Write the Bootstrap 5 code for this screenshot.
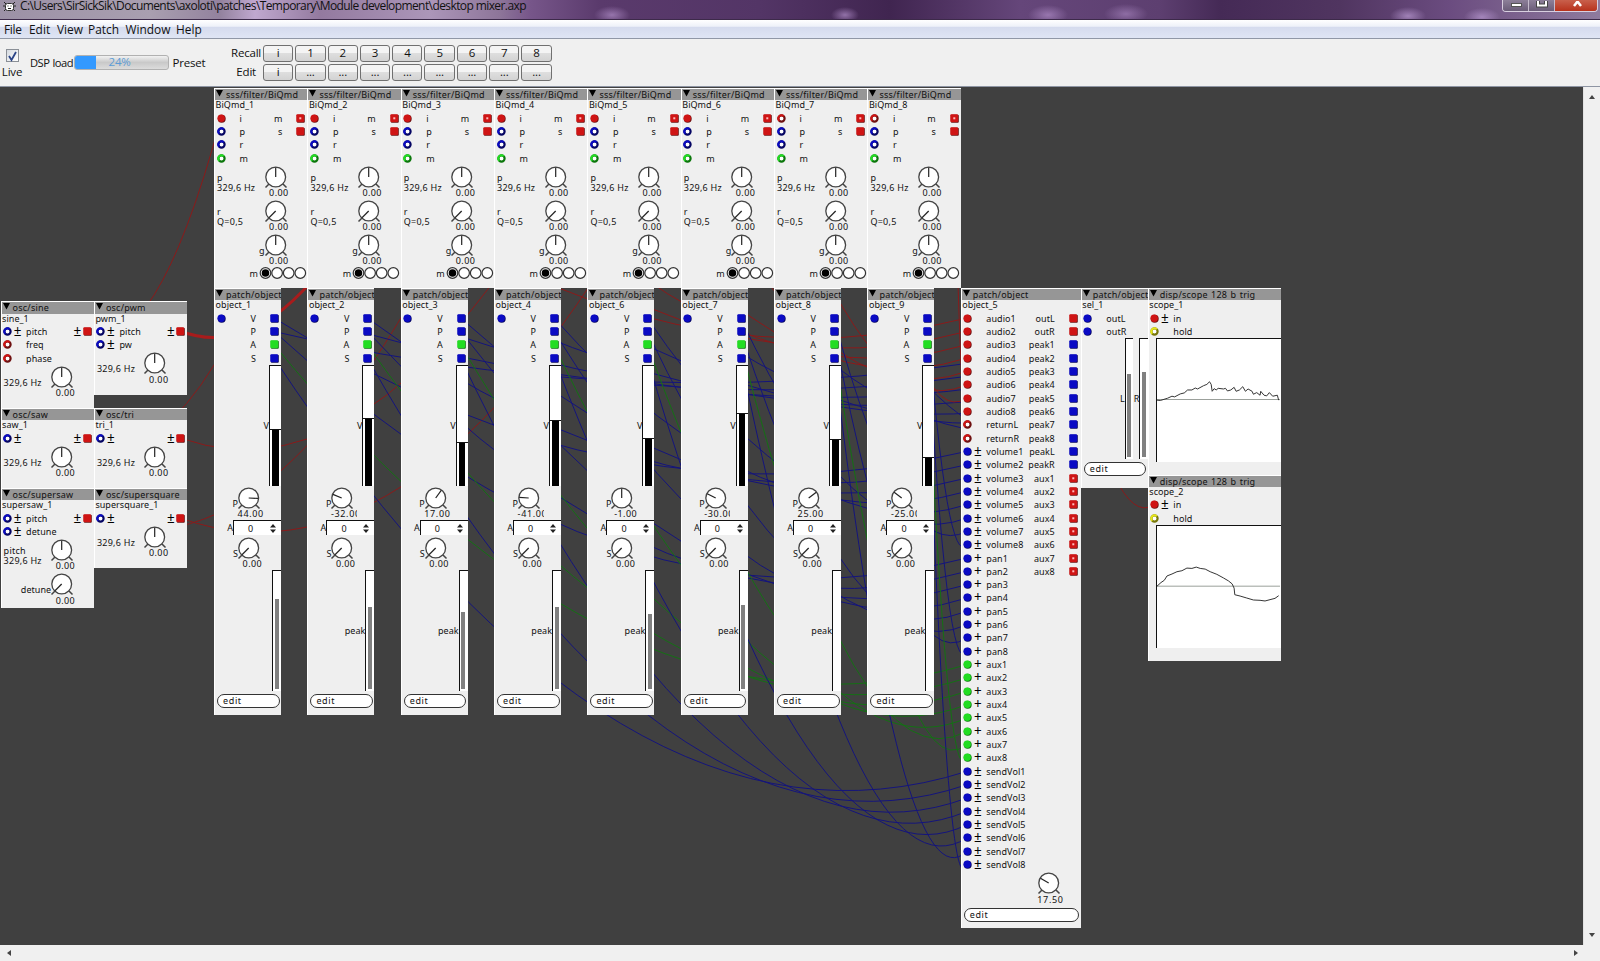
<!DOCTYPE html>
<html lang="en">
<head>
<meta charset="utf-8">
<title>desktop mixer.axp</title>
<link href="https://cdn.jsdelivr.net/npm/bootstrap@5.3.0/dist/css/bootstrap.min.css" rel="stylesheet">
<style>
html,body{height:100%}
body{font-family:"Open Sans","Noto Sans",sans-serif;font-size:12px;line-height:1;color:#111;background:#f0f0f0;overflow:hidden}
.titlebar{height:20px;padding-left:20px;font-size:12px;letter-spacing:-.59px;border-bottom:1px solid #3d2a4a;
 background:radial-gradient(ellipse 18px 9px at 612px 15px,#a583bccc,transparent),radial-gradient(ellipse 14px 8px at 845px 15px,#a583bccc,transparent),radial-gradient(ellipse 20px 10px at 1048px 15px,#a583bccc,transparent),radial-gradient(ellipse 22px 10px at 1126px 14px,#a583bcaa,transparent),radial-gradient(ellipse 18px 9px at 1408px 16px,#b091c8cc,transparent),radial-gradient(ellipse 18px 9px at 1482px 17px,#b091c8cc,transparent),
 linear-gradient(90deg,#9c91a6 0,#a99fb0 150px,#93829e 220px,#c0a8cf 255px,#937a9f 320px,#ac96b9 430px,#8d7599 500px,#77568a 530px,#5a3a6c 600px,#533566 760px,#402550 890px,#65467a 1020px,#5d3f70 1160px,#452a56 1220px,#503560 1340px,#6b4c80 1450px,#8f7b9e 1600px)}
.titlebar .app{left:3px;top:1px}
.titlebar .path{line-height:12px;white-space:nowrap}
.winbtns{right:2px;top:0;height:12px;border:1px solid #d8cfe0;border-top:0;border-radius:0 0 4px 4px;overflow:hidden}
.winbtns span{width:26px;background:linear-gradient(#8d8099,#6a5c78);border-right:1px solid #c5bccd}
.winbtns span:last-child{width:42px;background:linear-gradient(#c8604c,#b8321c);border:0}
.menubar{height:19px;border-bottom:1px solid #9097a6;background:linear-gradient(#fff 0,#eef1f9 35%,#d5dbee 40%,#dfe5f4 100%)}
.menubar span{position:static;line-height:18px;font-size:11.9px}
.menubar span:first-child{letter-spacing:-.3px}
.tools{height:48px;border-bottom:1px solid #8e95a3;font-size:11.5px;letter-spacing:-.2px}
.chk{width:13px;height:13px;border:1px solid #8a8f96;background:linear-gradient(135deg,#d5dae0,#fff)}
.dsp{width:43.5px;white-space:nowrap;letter-spacing:-.5px;word-spacing:.5px;font-size:11.2px}
.meter{width:95px;height:15px;border:1px solid #b1b1b1;border-radius:3px;background:linear-gradient(#f2f2f2,#c9c9c9 50%,#dcdcdc);overflow:hidden}
.meter i{width:21px;height:100%;background:#3399ff}
.meter b{left:34px;top:0;font-weight:400;color:#5c9cd6;line-height:12px}
.presets{display:grid;grid-template-columns:30px repeat(9,30.3px);column-gap:2px;row-gap:2.8px;align-content:start;padding-top:6px}
.presets div{height:16.6px;line-height:16px}
.presets .pb{border:1px solid #707070;border-radius:3px;background:linear-gradient(#f4f4f4 50%,#dedede 50%,#d3d3d3);text-align:center;line-height:14px}
.view{height:858px}
.sheet{width:1583px;background:#404040;overflow:hidden}
.vbar{width:17px;background:#f0f0f0;border-left:1px solid #e3e3e3}
.hbar{height:16px;background:#f0f0f0}
.wires{left:0;top:0;fill:none;stroke-width:1}
.unit{background:#efefef;border-top:1px solid #fff;border-left:1px solid #fff;font:9px/11px "Noto Sans",sans-serif;letter-spacing:.08px;color:#111;overflow:hidden;white-space:nowrap}
.unit .hd{height:11.3px;background:#969696;line-height:11px;padding-left:1px;letter-spacing:.22px;word-spacing:.8px}
.unit .hd svg{margin-right:3px;vertical-align:1px}
.unit .nm{height:11px;line-height:10.5px;padding-left:.5px;letter-spacing:.05px}
.port{height:13.333px;padding:0 2px 0 1.5px}
.wide .port{padding-right:3px}
.port .pm{width:11px;font-size:13.5px;line-height:11px;text-align:center;color:#000;letter-spacing:0}
.port .il{padding-left:3px}
.port .ol{padding-right:14px}
.port .ol.near{padding-right:0}
.port svg{flex:none}
.param{height:34.1px}
.param .lb{height:34px;letter-spacing:.25px}
.param .lb.stack{padding:8px 0 0 2px;line-height:10px}
.param .lb.mid{padding:12px 0 0 2px}
.param .lb.side{padding-top:12px;text-align:right;position:relative;left:2px;letter-spacing:.05px}
.dial{width:30px}
.dial svg{display:block}
.dial .vl{margin-top:-.6px;padding-left:3.5px;text-align:center;line-height:10px;letter-spacing:.4px;width:29px}
.dial .vl.long{text-align:left;padding-left:1.5px;width:29.5px;letter-spacing:.65px}
.dial .vl.clip{overflow:hidden;width:27.5px}
.radios{height:12px}
.track{background:#fff;border-left:1.5px solid #111;border-top:1.5px solid #111;height:121.3px}
.track i{display:block}
.spin{height:15px;width:48px;background:#fff;border-left:1.5px solid #111;border-top:1.5px solid #111;padding:0 5px 0 14px}
.ed{height:14px;border:1.3px solid #333;border-radius:7px;background:#fff;line-height:12px;padding-left:5px;margin:2.8px 1.5px 0 2px;letter-spacing:.6px}
</style>
</head>
<body class="d-flex flex-column">
<header class="titlebar position-relative flex-shrink-0">
 <svg class="app position-absolute" width="13" height="11" viewBox="0 0 13 11"><path d="M1 1l2 2M12 1l-2 2M0 5h3M13 5h-3M1 10l2-2M12 10l-2-2" stroke="#222"/><rect x="2.5" y="2.5" width="8" height="7" rx="2" fill="#fff" stroke="#333"/><path d="M4.500 5h1M7.500 5h1M5 7.500h3" stroke="#222"/></svg>
 <div class="path" id="path">C:\Users\SirSickSik\Documents\axoloti\patches\Temporary\Module development\desktop mixer.axp</div>
 <div class="winbtns position-absolute d-flex"><span><svg width="25" height="12"><rect x="8.500" y="2.500" width="10" height="3" fill="#fff" stroke="#555"/></svg></span><span><svg width="25" height="12"><rect x="9" y="-2" width="8" height="6.500" fill="none" stroke="#444" stroke-width="4"/><rect x="9" y="-2" width="8" height="6.500" fill="none" stroke="#fff" stroke-width="2"/></svg></span><span><svg width="42" height="12"><path d="M19 -4l7 9M26 -4l-7 9" stroke="#fff" stroke-width="2.500"/></svg></span></div>
</header>
<nav class="menubar d-flex flex-shrink-0" style="padding-left:4px"><span style="width:25px">File</span><span style="width:28px">Edit</span><span style="width:31px">View</span><span style="width:37.500px">Patch</span><span style="width:50.500px">Window</span><span>Help</span></nav>
<section class="tools d-flex flex-shrink-0">
 <div class="d-flex flex-column align-items-center" style="width:24px;padding-top:10px"><div class="chk"><svg width="11" height="11" viewBox="0 0 11 11"><path d="M2 5l2.500 4L9 1" fill="none" stroke="#2a4487" stroke-width="1.800"/></svg></div><div class="mt-1">Live</div></div>
 <div class="d-flex align-items-center" style="width:207px;padding-left:6px"><span class="dsp">DSP load</span><div class="meter position-relative d-flex"><i></i><b class="position-absolute">24%</b></div><span class="ms-1">Preset</span></div>
 <div class="presets" id="presets"></div>
</section>
<main class="view d-flex flex-shrink-0">
 <div class="sheet position-relative" id="sheet"></div>
 <div class="vbar d-flex flex-column justify-content-between align-items-center py-2"><svg width="6" height="4"><path d="M3 0l3 4H0z" fill="#444"/></svg><svg width="6" height="4"><path d="M3 4l3-4H0z" fill="#444"/></svg></div>
</main>
<footer class="hbar d-flex justify-content-between align-items-center flex-shrink-0" style="padding:0 22px 0 7px"><svg width="4" height="6"><path d="M0 3l4-3v6z" fill="#444"/></svg><svg width="4" height="6"><path d="M4 3l-4-3v6z" fill="#444"/></svg></footer>
<script src="https://cdn.jsdelivr.net/npm/bootstrap@5.3.0/dist/js/bootstrap.bundle.min.js"></script>
<script>
const U = 13.333, TOP = 87, RED = '#cf1414', BLUE = '#0a0ac4', GREEN = '#22dd22';
const DARK = {r:'#6d1010', b:'#050563', g:'#0b760b', y:'#77770a'}, MAIN = {r:RED, b:BLUE, g:GREEN, y:'#e6e61a'};

document.getElementById('presets').innerHTML = ['Recall','Edit'].map((n, r) =>
  `<div class="text-end" style="padding-right:5px">${n}</div><div class="pb">i</div>` +
  [1,2,3,4,5,6,7,8].map(k => `<div class="pb">${r ? '...' : k}</div>`).join('')).join('');

// Inlets: a lower-case code is wired (disc), an upper-case one is free (ring)
const disc = c => {
  if (!c) return '<svg width="9" height="9"></svg>';
  const k = c.toLowerCase(), free = c !== k;
  return free ? `<svg width="9" height="9"><circle cx="4.500" cy="4.500" r="3.100" fill="#fff" stroke="${DARK[k]}" stroke-width="2.200"/><path d="M2.300 6.700A3.100 3.100 0 0 1 6.700 2.300" fill="none" stroke="${MAIN[k]}" stroke-width="2"/></svg>`
   : `<svg width="9" height="9"><circle cx="4.700" cy="4.700" r="4" fill="${DARK[k]}"/><circle cx="4.200" cy="4.200" r="3.700" fill="${MAIN[k]}"/></svg>`;
};
const square = c => {
  const k = c.toLowerCase(), free = c !== k;
  return `<svg width="9" height="9"><rect x=".8" y=".8" width="8" height="8" rx="1" fill="${DARK[k]}"/><rect x=".3" y=".3" width="7.700" height="7.700" rx="1" fill="${MAIN[k]}"/>${free ? '<rect x="3.300" y="3.300" width="2" height="2" fill="#fbb"/>' : ''}</svg>`;
};
// port: [inlet, sign, label, outlet label, outlet sign, outlet]
const port = p => `<div class="port d-flex align-items-center">${disc(p[0])}<span class="pm">${p[1]||''}</span><span class="il">${p[2]||''}</span>` +
  (p[5] ? `<span class="ms-auto ol ${p[4] ? 'near' : ''}">${p[3]||''}</span>${p[4] ? `<span class="pm">${p[4]}</span>` : ''}${square(p[5])}` : '') + '</div>';
const dial = (a, v) => {
  const t = a * Math.PI / 180;
  const cls = v.length > 5 ? 'long clip' : v.length > 4 && v[0] !== '-' ? 'long' : '';
  return `<div class="dial"><svg width="26" height="24"><path d="M6 19l-3.500 3.500M20 19l3.500 3.500" stroke="#444" stroke-width="1.500"/><circle cx="12.700" cy="12" r="9.900" fill="#fff" stroke="#444" stroke-width="1.300"/><path d="M12.700 12L${12.7 + 9.5*Math.sin(t)} ${12 - 9.5*Math.cos(t)}" stroke="#222" stroke-width="1.200"/></svg><div class="vl ${cls}">${v}</div></div>`;
};
const param = (kind, w, label, a, v) => `<div class="param d-flex"><div class="lb ${kind}" style="width:${w}px">${label}</div>${dial(a, v)}</div>`;
const edit = '<div class="ed">edit</div>';
const units = [];
const unit = (x, row, w, rows, type, name, body, cls = '') =>
  units.push(`<div class="unit position-absolute ${cls}" style="left:${(x-.4).toFixed(2)}px;top:${(88.15 - TOP + row*U).toFixed(2)}px;width:${w}px;height:${(rows*U).toFixed(2)}px"><div class="hd"><svg width="7" height="7"><path d="M0 0h7l-3.500 6.500z" fill="#000"/></svg>${type}</div><div class="nm">${name}</div>${body}</div>`);

// oscillators
const hz = '329,6 Hz';
unit(1, 16, 93.4, 8, 'osc/sine', 'sine_1', port(['B','±','pitch','','±','r']) + port(['R','','freq']) + port(['R','','phase']) + param('mid', 47.6, hz, 0, '0.00'));
unit(94.3, 16, 93.4, 7, 'osc/pwm', 'pwm_1', port(['B','±','pitch','','±','r']) + port(['B','±','pw']) + param('mid', 47.6, hz, 0, '0.00'));
unit(1, 24, 93.4, 6, 'osc/saw', 'saw_1', port(['B','±','','','±','r']) + param('mid', 47.6, hz, 0, '0.00'));
unit(94.3, 24, 93.4, 6, 'osc/tri', 'tri_1', port(['B','±','','','±','r']) + param('mid', 47.6, hz, 0, '0.00'));
unit(1, 30, 93.4, 9, 'osc/supersaw', 'supersaw_1', port(['B','±','pitch','','±','r']) + port(['B','±','detune']) + param('stack', 47.6, 'pitch<br>' + hz, 0, '0.00') + param('side', 47.6, 'detune', -135, '0.00'));
unit(94.3, 30, 93.4, 6, 'osc/supersquare', 'supersquare_1', port(['B','±','','','±','r']) + param('mid', 47.6, hz, 0, '0.00'));

// filters
for (let k = 0; k < 8; k++)
  unit(214.5 + 93.33*k, 0, 93.4, 15, 'sss/filter/BiQmd', 'BiQmd_' + (k+1),
    port([k < 6 ? 'r' : 'R','','i','m','','R']) + port(['B','','p','s','','r']) + port(['B','','r']) + port(['G','','m']) +
    param('stack', 47.5, 'p<br>' + hz, 0, '0.00') + param('stack', 47.5, 'r<br>Q=0,5', -135, '0.00') + param('side', 47.5, 'g', 0, '0.00') +
    `<div class="radios d-flex justify-content-end align-items-center"><span style="padding-right:1px">m</span><svg width="48.500" height="12">${[0,1,2,3].map(i => `<circle cx="${6.5 + 11.6*i}" cy="6" r="5.300" fill="#fff" stroke="#333" stroke-width="1.200"/>`).join('')}<circle cx="6.500" cy="6" r="3.800" fill="#000"/></svg></div>`);

// channel strips: number, volume fill top, pan, peak fill top
[[1,429,44,599],[2,418.3,-32,607],[3,442,17,612],[4,420.5,-41,607],[6,438.5,-1,614],[7,413.7,-30,605],[8,439,25,0],[9,457.5,-25,0]].forEach((c, k) =>
  unit(214.5 + 93.33*k, 15, 67, 32, 'patch/object', 'object_' + c[0],
    port(['b','','','V','','b']) + port(['','','','P','','b']) + port(['','','','A','','g']) + port(['','','','S','','b']) +
    `<div class="d-flex justify-content-end align-items-center"><span>V</span><div class="track" style="width:12px"><i style="margin-top:${c[1]-366.2}px;border-top:1.500px solid #111"></i><i style="height:${485-c[1]}px;width:6.500px;margin-left:2px;background:#000"></i></div></div>` +
    param('side', 21, 'P', c[0] === 6 ? 0 : c[2]/64*135, c[2].toFixed(2)) +
    `<div class="d-flex justify-content-end align-items-center" style="height:15.500px"><span>A</span><div class="spin d-flex justify-content-between align-items-center"><span>0</span><svg width="6" height="9"><path d="M0 3.500l3-3.500L6 3.500zM0 5.500l3 3.500L6 5.500z" fill="#222"/></svg></div></div>` +
    param('side', 21, 'S', -135, '0.00') +
    `<div class="d-flex justify-content-end align-items-center"><span>${k ? 'peak' : ''}</span><div class="track" style="width:9px">${c[3] ? `<i style="margin-top:${c[3]-571}px;height:${689.5-c[3]}px;width:4px;margin-left:1.500px;background:#808080"></i>` : ''}</div></div>` + edit));

// mixer
const ins = [], outs = [];
const seq = (n, f) => Array.from({length:n}, (_, i) => f(i + 1));
ins.push(...seq(8, i => ['r','','audio'+i]), ['R','','returnL'], ['R','','returnR'], ...seq(8, i => ['b','±','volume'+i]), ...seq(8, i => ['b','+','pan'+i]), ...seq(8, i => ['g','+','aux'+i]), ...seq(8, i => ['b','±','sendVol'+i]));
outs.push(['outL','','r'], ['outR','','r'], ...seq(8, i => ['peak'+i,'','b']), ['peakL','','b'], ['peakR','','b'], ...seq(8, i => ['aux'+i,'','R']));
unit(961.2, 15, 120, 48, 'patch/object', 'object_5', ins.map((p, i) => port(p.concat(outs[i] || []))).join('') + param('side', 74, '', -60, '17.50') + edit, 'wide');
const bar = (l, top) => `<span>${l}</span><div class="track" style="width:8.500px"><i style="margin-top:${top-339.5}px;height:${457-top}px;width:4px;margin-left:1.500px;background:#808080"></i></div>`;
unit(1081.2, 15, 67.2, 15, 'patch/object', 'sel_1', port(['b','','outL']) + port(['b','','outR']) + `<div class="d-flex justify-content-end align-items-center">${bar('L', 374)}<span style="width:.500px"></span>${bar('R', 372.5)}</div>` + edit);

// scopes
const scope = (mid, pts) => `<div class="track ms-auto" style="width:124.500px;height:123.500px"><svg class="d-block" width="123" height="122" viewBox="0 0 370 371" preserveAspectRatio="none" fill="none"><path d="M0 ${mid}H370" stroke="#9a9f9a" stroke-width="3"/><polyline points="${pts}" stroke="#333" stroke-width="3"/></svg></div>`;
const shift = (s, dx, dy) => s.split(' ').map(p => p.split(',')).map(([x, y]) => (x-dx) + ',' + (y-dy)).join(' ');
unit(1148.2, 15, 133, 14, 'disp/scope 128 b trig', 'scope_1', port(['r','±','in']) + port(['Y','','hold']) +
  scope(184, shift('230,343 240,344 262,337 275,331 283,333 300,324 312,321 322,312 335,312 345,306 352,309 370,299 380,295 388,287 393,295 396,316 402,308 408,312 414,307 430,309 436,307 442,315 452,312 462,304 468,316 478,312 488,302 496,316 504,309 516,316 520,325 530,320 540,328 542,316 552,328 560,330 568,320 578,331 592,328 596,343', 230, 157)));
unit(1148.2, 29, 133, 14, 'disp/scope 128 b trig', 'scope_2', port(['r','±','in']) + port(['Y','','hold']) +
  scope(183, shift('50,346 62,335 72,328 80,315 95,309 110,302 125,299 140,291 155,292 168,288 180,292 195,294 210,302 230,310 250,321 265,330 276,339 282,352 284,372 300,376 320,382 340,388 360,389 375,391 390,387 405,383 416,375', 50, 163)));

// patch cords: each sags below its lower end
const cords = [];
const cord = (c, x1, y1, x2, y2, w = 1) => {
  const cy = Math.max(y1, y2) + Math.abs(y2-y1)*.1 + Math.abs(x2-x1)*.1;
  cords.push(`<path stroke="${c}" stroke-width="${w}" d="M${x1} ${y1-TOP}Q${(x1+x2)/2} ${cy-TOP} ${x2} ${y2-TOP}"/>`);
};
const R = '#8a1a1a', B = '#14147c', G = '#147014', row = n => 318 + n*U;
[[87,331],[87,438],[180,331],[87,518],[180,438],[180,518]].forEach((s, k) => cord(k === 2 ? '#a81c1c' : R, s[0], s[1], 221 + 93.33*k, 118, k === 2 ? 3 : 1));
for (let k = 0; k < 8; k++) {
  const x = 274 + 93.33*k;
  cord(R, 301 + 93.33*k, 131, 967, row(k));
  cord(B, x, row(0), 967, row(10+k));
  cord(B, x, row(1), 967, row(18+k));
  cord(G, x, row(2), 967, row(26+k));
  cord(B, x, row(3), 967, row(34+k));
  cord(B, 1073, row(2+k), 221 + 93.33*k, row(0));
}
cord(R, 1073, row(0), 1154, row(0));
cord(R, 1073, row(1), 1154, 505);
document.getElementById('sheet').innerHTML = `<svg class="wires position-absolute" width="1583" height="858">${cords.join('')}</svg>` + units.join('');
</script>
</body>
</html>
